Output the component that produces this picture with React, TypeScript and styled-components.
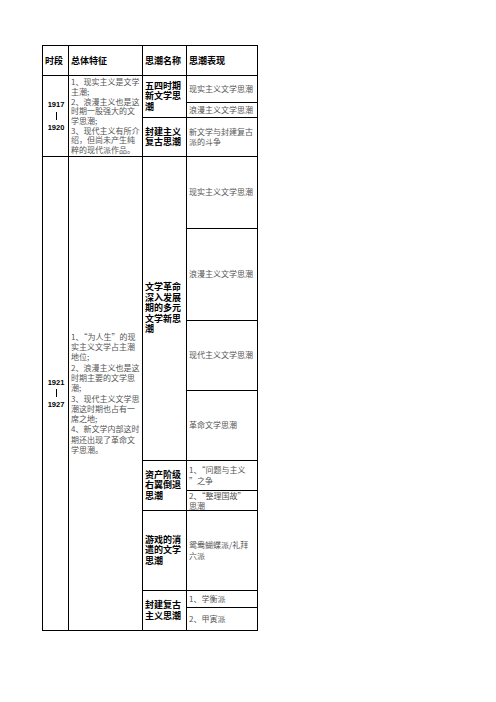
import styled, { createGlobalStyle } from "styled-components";

const GlobalStyle = createGlobalStyle`
  html, body { margin: 0; padding: 0; background: #fff; }
  body { font-family: "Noto Sans CJK SC", "Liberation Sans", sans-serif; }
`;

const Page = styled.div`
  width: 496px;
  height: 702px;
  padding: 45px 0 0 42px;
  box-sizing: border-box;
`;

// 1px black lines come from the grid gap over a black background
const Sheet = styled.div`
  display: grid;
  width: 216px;
  grid-template-columns: 25px 73px 43px 70px;
  grid-template-rows: 29px 26px 14px 38px 71px 91px 69px 69px 29px 19px 79px 16px 22px;
  gap: 1px;
  padding: 1px;
  box-sizing: border-box;
  background: #000;
`;

const Cell = styled.div<{ $row: string; $col: number; $center?: boolean }>`
  grid-row: ${(p) => p.$row};
  grid-column: ${(p) => p.$col};
  background: #fff;
  display: flex;
  align-items: center;
  justify-content: ${(p) => (p.$center ? "center" : "flex-start")};
  padding: 0 1px 0 2px;
  overflow: hidden;
`;

const Head = styled.span`
  font-size: 9px;
  font-weight: 700;
  color: #000;
  white-space: nowrap;
`;

const Label = styled.span`
  font-size: 9px;
  line-height: 10.5px;
  font-weight: 700;
  color: #000;
  white-space: pre;
`;

const Plain = styled.span<{ $lh?: number }>`
  font-size: 8px;
  line-height: ${(p) => p.$lh ?? 10.3}px;
  color: #555;
  white-space: pre;
`;

const Period = styled.span`
  font-family: "Liberation Sans", Arial, sans-serif;
  font-size: 7.5px;
  line-height: 11px;
  font-weight: 700;
  color: #000;
  text-align: center;
  white-space: pre;
`;

const Bar = styled.span`
  display: block;
  width: 1px;
  height: 8px;
  margin: 1.5px auto 2px;
  background: #000;
`;

function Years({ from, to }: { from: string; to: string }) {
  return (
    <Period>
      {from}
      <Bar />
      {to}
    </Period>
  );
}

export default function App() {
  return (
    <Page>
      <GlobalStyle />
      <Sheet>
        <Cell $row="1" $col={1}><Head>时段</Head></Cell>
        <Cell $row="1" $col={2}><Head>总体特征</Head></Cell>
        <Cell $row="1" $col={3}><Head>思潮名称</Head></Cell>
        <Cell $row="1" $col={4}><Head>思潮表现</Head></Cell>

        <Cell $row="2 / 5" $col={1} $center><Years from="1917" to="1920" /></Cell>
        <Cell $row="2 / 5" $col={2}>
          <Plain $lh={9.7}>{"1、现实主义是文学\n主潮;\n2、浪漫主义也是这\n时期一股强大的文\n学思潮;\n3、现代主义有所介\n绍，但尚未产生纯\n粹的现代派作品。"}</Plain>
        </Cell>
        <Cell $row="2 / 4" $col={3}><Label>{"五四时期\n新文学思\n潮"}</Label></Cell>
        <Cell $row="2" $col={4}><Plain>现实主义文学思潮</Plain></Cell>
        <Cell $row="3" $col={4}><Plain>浪漫主义文学思潮</Plain></Cell>
        <Cell $row="4" $col={3}><Label>{"封建主义\n复古思潮"}</Label></Cell>
        <Cell $row="4" $col={4}><Plain>{"新文学与封建复古\n派的斗争"}</Plain></Cell>

        <Cell $row="5 / 14" $col={1} $center><Years from="1921" to="1927" /></Cell>
        <Cell $row="5 / 14" $col={2}>
          <Plain>{"1、“为人生”的现\n实主义文学占主潮\n地位;\n2、浪漫主义也是这\n时期主要的文学思\n潮;\n3、现代主义文学思\n潮这时期也占有一\n席之地;\n4、新文学内部这时\n期还出现了革命文\n学思潮。"}</Plain>
        </Cell>
        <Cell $row="5 / 9" $col={3}><Label>{"文学革命\n深入发展\n期的多元\n文学新思\n潮"}</Label></Cell>
        <Cell $row="5" $col={4}><Plain>现实主义文学思潮</Plain></Cell>
        <Cell $row="6" $col={4}><Plain>浪漫主义文学思潮</Plain></Cell>
        <Cell $row="7" $col={4}><Plain>现代主义文学思潮</Plain></Cell>
        <Cell $row="8" $col={4}><Plain>革命文学思潮</Plain></Cell>

        <Cell $row="9 / 11" $col={3}><Label>{"资产阶级\n右翼倒退\n思潮"}</Label></Cell>
        <Cell $row="9" $col={4}><Plain>{"1、“问题与主义\n”之争"}</Plain></Cell>
        <Cell $row="10" $col={4}><Plain $lh={9.2}>{"2、“整理国故”\n思潮"}</Plain></Cell>

        <Cell $row="11" $col={3}><Label>{"游戏的消\n遣的文学\n思潮"}</Label></Cell>
        <Cell $row="11" $col={4}><Plain>{"鸳鸯蝴蝶派/礼拜\n六派"}</Plain></Cell>

        <Cell $row="12 / 14" $col={3}><Label>{"封建复古\n主义思潮"}</Label></Cell>
        <Cell $row="12" $col={4}><Plain>1、学衡派</Plain></Cell>
        <Cell $row="13" $col={4}><Plain>2、甲寅派</Plain></Cell>
      </Sheet>
    </Page>
  );
}
